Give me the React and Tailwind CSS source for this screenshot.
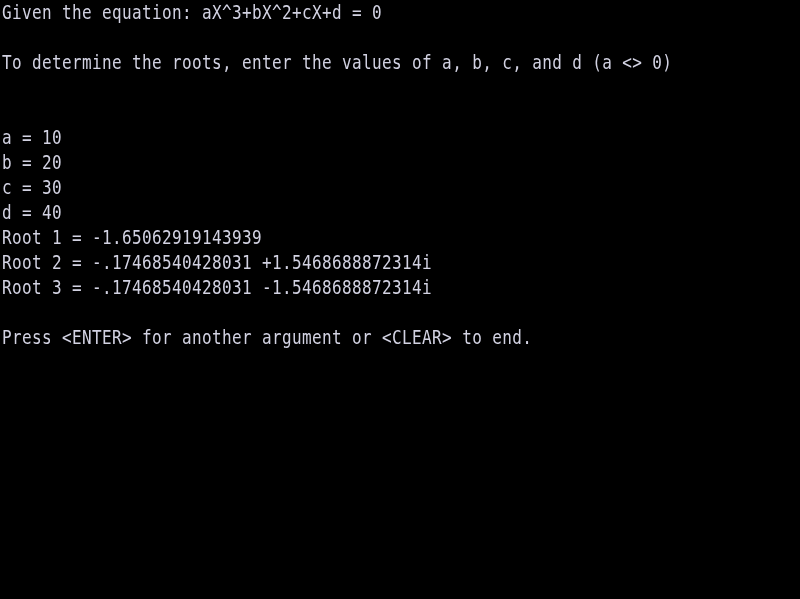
import React from 'react';

const lines = [
  'Given the equation: aX^3+bX^2+cX+d = 0',
  '',
  'To determine the roots, enter the values of a, b, c, and d (a <> 0)',
  '',
  '',
  'a = 10',
  'b = 20',
  'c = 30',
  'd = 40',
  'Root 1 = -1.65062919143939',
  'Root 2 = -.17468540428031 +1.5468688872314i',
  'Root 3 = -.17468540428031 -1.5468688872314i',
  '',
  'Press <ENTER> for another argument or <CLEAR> to end.',
];

const App = () => {
  return (
    <div className="w-[800px] h-[599px] bg-black overflow-hidden pl-[2px]">
      {/* Screen text, one row per line */}
      {lines.map((line, i) => (
        <div
          key={i}
          className="h-[25px] leading-[25px] whitespace-pre text-[16px] tracking-[0.37px] text-[#d2d2e2] font-['DejaVu_Sans_Mono',monospace] scale-y-[1.2] origin-center blur-[0.3px]"
        >
          {line}
        </div>
      ))}
    </div>
  );
};

export default App;
